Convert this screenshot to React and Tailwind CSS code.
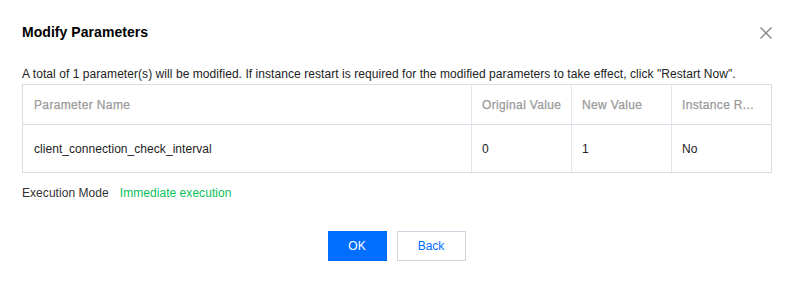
export default function App() {
  return (
    <div className="w-[795px] h-[281px] bg-white text-[12px] text-[#000000e6]" style={{ fontFamily: '"Liberation Sans", Arial, sans-serif' }}>
      <div className="flex items-start justify-between pl-[22px] pr-[22px] pt-[22px]">
        <div className="text-[14px] font-bold leading-[20px] text-black tracking-[0.05px]">Modify Parameters</div>
        <svg width="14" height="14" viewBox="0 0 14 14" className="mt-[4px]">
          <path d="M1.5 1.5 L12.5 12.5 M12.5 1.5 L1.5 12.5" stroke="#888" strokeWidth="1.4" />
        </svg>
      </div>
      <div className="pl-[22px] pr-[24px] pt-[23px]">
        <div className="leading-[18px] text-[#222] tracking-[0.06px]">
          A total of 1 parameter(s) will be modified. If instance restart is required for the modified parameters to take effect, click "Restart Now".
        </div>
        <div className="mt-[1px] border border-[#d9dde5] w-[750px]">
          <div className="grid grid-cols-[448px_100px_100px_100px] h-[40px] border-b border-[#d9dde5] text-[#9a9a9a] tracking-[0.35px] whitespace-nowrap [-webkit-text-stroke:0.25px_#9a9a9a]">
            <div className="px-[11px] flex items-center">Parameter Name</div>
            <div className="px-[10px] flex items-center border-l border-[#e3e5ea]">Original Value</div>
            <div className="px-[10px] flex items-center border-l border-[#e3e5ea]">New Value</div>
            <div className="px-[10px] flex items-center border-l border-[#e3e5ea] overflow-hidden">Instance R...</div>
          </div>
          <div className="grid grid-cols-[448px_100px_100px_100px] h-[47px] text-[#222] tracking-[0.05px]">
            <div className="px-[11px] flex items-center">client_connection_check_interval</div>
            <div className="px-[10px] flex items-center border-l border-[#e3e5ea]">0</div>
            <div className="px-[10px] flex items-center border-l border-[#e3e5ea]">1</div>
            <div className="px-[10px] flex items-center border-l border-[#e3e5ea]">No</div>
          </div>
        </div>
        <div className="flex items-center mt-[11px] leading-[18px] tracking-[0.05px]">
          <span className="text-[#333]">Execution Mode</span>
          <span className="ml-[11px] text-[#0abf5b]">Immediate execution</span>
        </div>
        <div className="flex justify-center gap-[10px] mt-[29px]">
          <button className="w-[59px] h-[30px] bg-[#006eff] text-white text-[12px]">OK</button>
          <button className="w-[69px] h-[30px] border border-[#cfd5de] bg-white text-[#006eff] text-[12px]">Back</button>
        </div>
      </div>
    </div>
  );
}
